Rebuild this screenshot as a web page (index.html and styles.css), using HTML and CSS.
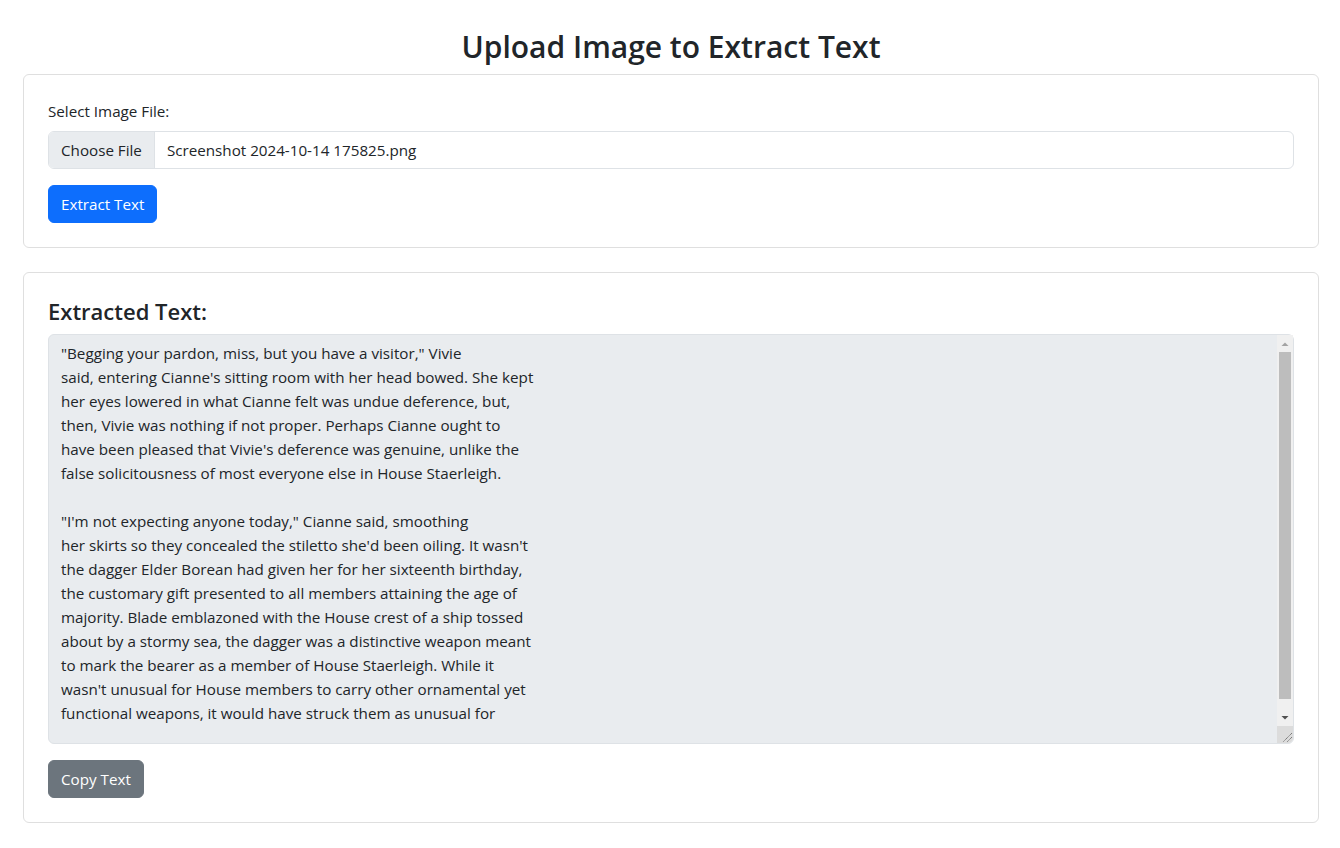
FILE: index.html
```html
<!DOCTYPE html>
<html lang="en">
<head>
    <meta charset="UTF-8">
    <meta name="viewport" content="width=device-width, initial-scale=1.0">
    <title>Image to Text</title>
    <link rel="stylesheet" href="styles.css">
</head>
<body>
    <div class="container">
        <h2 class="page-title">Upload Image to Extract Text</h2>

        <div class="card">
            <div class="card-body">
                <label class="form-label" for="imageFile">Select Image File:</label>
                <div class="file-control" id="imageFile">
                    <span class="file-btn">Choose File</span>
                    <span class="file-name">Screenshot 2024-10-14 175825.png</span>
                </div>
                <button class="btn btn-primary">Extract Text</button>
            </div>
        </div>

        <div class="card">
            <div class="card-body">
                <h4 class="result-title">Extracted Text:</h4>
                <div class="text-wrap">
                    <textarea class="form-control result-text" readonly>"Begging your pardon, miss, but you have a visitor," Vivie
said, entering Cianne's sitting room with her head bowed. She kept
her eyes lowered in what Cianne felt was undue deference, but,
then, Vivie was nothing if not proper. Perhaps Cianne ought to
have been pleased that Vivie's deference was genuine, unlike the
false solicitousness of most everyone else in House Staerleigh.

"I'm not expecting anyone today," Cianne said, smoothing
her skirts so they concealed the stiletto she'd been oiling. It wasn't
the dagger Elder Borean had given her for her sixteenth birthday,
the customary gift presented to all members attaining the age of
majority. Blade emblazoned with the House crest of a ship tossed
about by a stormy sea, the dagger was a distinctive weapon meant
to mark the bearer as a member of House Staerleigh. While it
wasn't unusual for House members to carry other ornamental yet
functional weapons, it would have struck them as unusual for
</textarea>
                    <!-- scrollbar drawn by hand, headless browser hides the real one -->
                    <div class="scrollbar" aria-hidden="true">
                        <span class="sb-btn">
                            <svg width="16" height="17" viewBox="0 0 16 17"><polygon points="4.5,11 8,7.5 11.5,11" fill="#a3a3a3"/></svg>
                        </span>
                        <span class="sb-track"><span class="sb-thumb"></span></span>
                        <span class="sb-btn">
                            <svg width="16" height="17" viewBox="0 0 16 17"><polygon points="4.5,7 11.5,7 8,10.5" fill="#505050"/></svg>
                        </span>
                        <span class="sb-corner">
                            <svg width="16" height="17" viewBox="0 0 16 17"><path d="M15 7 L6 16 M15 11 L10 16" stroke="#6a6a6a" stroke-width="1" stroke-dasharray="1.2 0.6"/></svg>
                        </span>
                    </div>
                </div>
                <button class="btn btn-secondary">Copy Text</button>
            </div>
        </div>
    </div>
</body>
</html>
```

FILE: styles.css
```css
body {
    margin: 0;
    font-family: 'Open Sans', 'Noto Sans', Arial, sans-serif;
    font-size: 15.2px;
    line-height: 24px;
    color: #212529;
    background-color: #ffffff;
}
.container {
    padding: 28px 21px 24px 23px;
}
.page-title {
    margin: 0 0 8px;
    font-size: 30px;
    font-weight: 600;
    line-height: 38px;
    text-align: center;
}
.card {
    border: 1px solid #dfdfdf;
    border-radius: 6px;
    background-color: #ffffff;
    margin-bottom: 24px;
}
.card-body {
    padding: 24px;
}
.form-label {
    display: block;
    margin-bottom: 8px;
}
.file-control {
    display: flex;
    height: 38px;
    border: 1px solid #dee2e6;
    border-radius: 6px;
    overflow: hidden;
    margin-bottom: 16px;
    box-sizing: border-box;
}
.file-btn {
    padding: 6px 12px;
    background-color: #e9ecef;
    border-right: 1px solid #dee2e6;
}
.file-name {
    padding: 6px 12px;
}
.btn {
    display: inline-block;
    font-family: inherit;
    font-size: 15.2px;
    line-height: 24px;
    padding: 6px 12px;
    border: 1px solid transparent;
    border-radius: 6px;
    color: #ffffff;
    cursor: pointer;
}
.btn-primary {
    background-color: #0d6efd;
    border-color: #0d6efd;
}
.btn-secondary {
    background-color: #6c757d;
    border-color: #6c757d;
}
.result-title {
    margin: 0 0 8px;
    font-size: 22px;
    font-weight: 600;
    line-height: 29px;
}
.form-control {
    display: block;
    width: 100%;
    box-sizing: border-box;
    font-family: inherit;
    font-size: 15.2px;
    line-height: 24px;
    color: #212529;
    border: 1px solid #dee2e6;
    border-radius: 6px;
}
.text-wrap {
    position: relative;
    margin-bottom: 16px;
}
.result-text {
    height: 410px;
    padding: 6px 12px;
    background-color: #e9ecef;
    resize: vertical;
    overflow: hidden;
}
.scrollbar {
    position: absolute;
    top: 1px;
    right: 1px;
    bottom: 1px;
    width: 16px;
    display: flex;
    flex-direction: column;
    background-color: #f0f0f0;
    border-bottom-right-radius: 5px;
    overflow: hidden;
    pointer-events: none;
}
.sb-btn,
.sb-corner {
    display: block;
    height: 17px;
    flex: none;
}
.sb-btn svg,
.sb-corner svg {
    display: block;
}
.sb-track {
    flex: 1;
    display: block;
}
.sb-thumb {
    display: block;
    height: 347px;
    margin: 0 2px;
    background-color: #bdbdbd;
}
.sb-corner {
    background-color: #dcdcdc;
}
```
